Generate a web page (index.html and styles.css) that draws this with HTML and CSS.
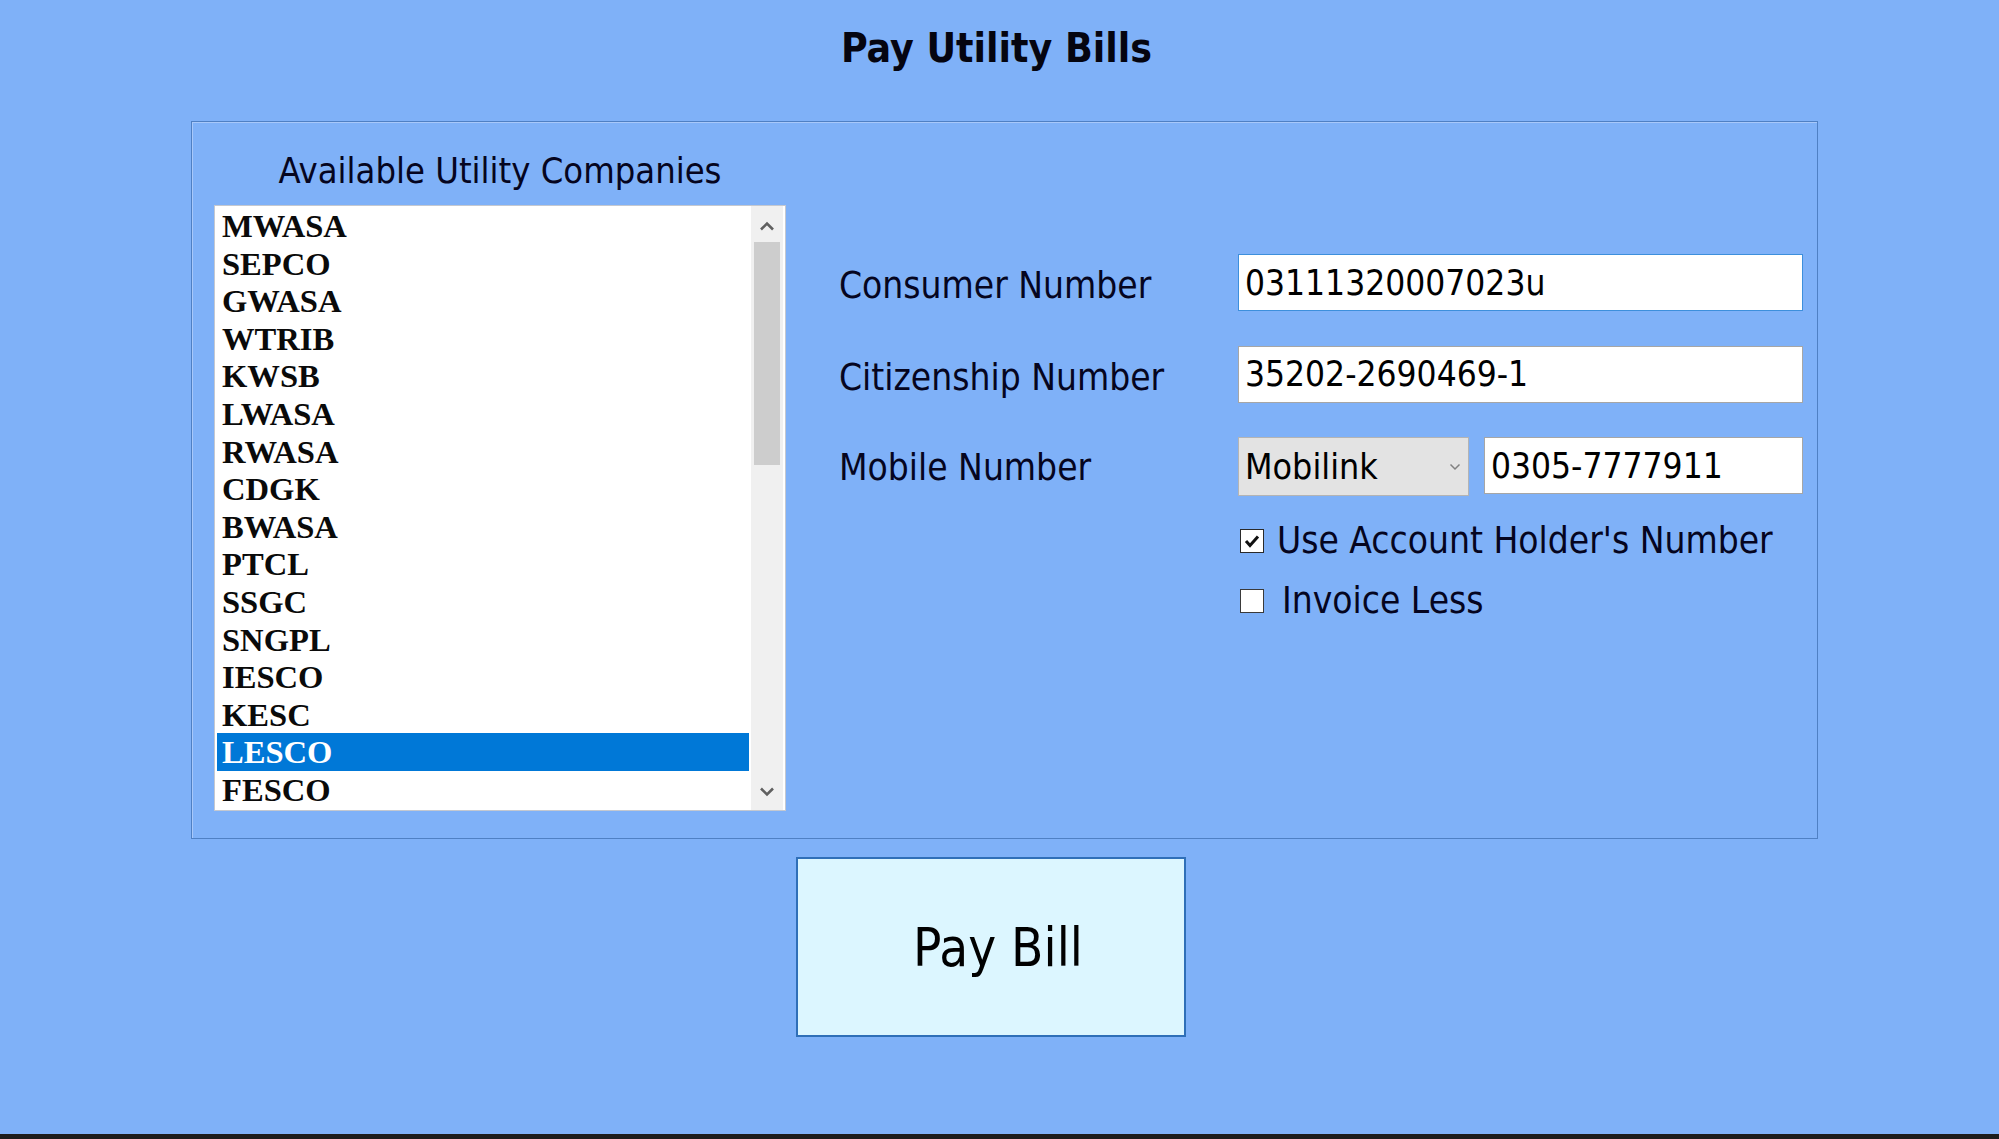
FILE: index.html
```html
<!DOCTYPE html>
<html lang="en">
<head>
<meta charset="utf-8">
<title>Pay Utility Bills</title>
<link rel="stylesheet" href="styles.css">
</head>
<body>
<div class="window">
  <h1 class="title">Pay Utility Bills</h1>
  <section class="group">
    <div class="companies">
      <div class="companies-label">Available Utility Companies</div>
      <div class="listbox">
        <ul class="items">
          <li>MWASA</li>
          <li>SEPCO</li>
          <li>GWASA</li>
          <li>WTRIB</li>
          <li>KWSB</li>
          <li>LWASA</li>
          <li>RWASA</li>
          <li>CDGK</li>
          <li>BWASA</li>
          <li>PTCL</li>
          <li>SSGC</li>
          <li>SNGPL</li>
          <li>IESCO</li>
          <li>KESC</li>
          <li class="selected">LESCO</li>
          <li>FESCO</li>
        </ul>
        <div class="scrollbar">
          <div class="sb-btn sb-up"><svg width="16" height="10" viewBox="0 0 16 10"><polyline points="2,8.5 8,2.5 14,8.5" fill="none" stroke="#606060" stroke-width="2.6"/></svg></div>
          <div class="sb-thumb"></div>
          <div class="sb-track"></div>
          <div class="sb-btn sb-down"><svg width="16" height="10" viewBox="0 0 16 10"><polyline points="2,1.5 8,7.5 14,1.5" fill="none" stroke="#606060" stroke-width="2.6"/></svg></div>
        </div>
      </div>
    </div>
    <div class="form">
      <div class="row">
        <span class="field-label">Consumer Number</span>
        <div class="input focused">03111320007023u</div>
      </div>
      <div class="row">
        <span class="field-label">Citizenship Number</span>
        <div class="input">35202-2690469-1</div>
      </div>
      <div class="row row-mobile">
        <span class="field-label">Mobile Number</span>
        <div class="mobile-controls">
          <div class="combo"><span>Mobilink</span><svg width="12" height="8" viewBox="0 0 12 8"><polyline points="1.5,1.5 6,6 10.5,1.5" fill="none" stroke="#808080" stroke-width="1.5"/></svg></div>
          <div class="input mobile-input">0305-7777911</div>
        </div>
      </div>
      <div class="checks">
        <div class="check">
          <span class="box checked"><svg width="22" height="22" viewBox="0 0 22 22"><polyline points="5,11 9,15.5 17,6.5" fill="none" stroke="#111" stroke-width="3"/></svg></span>
          <span class="check-label">Use Account Holder's Number</span>
        </div>
        <div class="check">
          <span class="box"></span>
          <span class="check-label invoice">Invoice Less</span>
        </div>
      </div>
    </div>
  </section>
  <button class="pay" type="button">Pay Bill</button>
</div>
<div class="taskbar"></div>
</body>
</html>
```
FILE: styles.css
```css
* {
  box-sizing: border-box;
}

html, body {
  margin: 0;
  padding: 0;
}

body {
  width: 1999px;
  height: 1139px;
  overflow: hidden;
  background: #7fb1f8;
  font-family: "DejaVu Sans Condensed", "DejaVu Sans", sans-serif;
  font-stretch: condensed;
  color: #000;
}

.window {
  height: 1134px;
  display: flex;
  flex-direction: column;
  align-items: flex-start;
}

.title {
  align-self: center;
  margin: 23px 0 0 -6px;
  height: 50px;
  line-height: 50px;
  font-size: 40.6px;
  font-weight: bold;
  color: #050510;
}

.group {
  margin: 48px 0 0 191px;
  width: 1627px;
  height: 718px;
  border: 1px solid #4f80c4;
  box-shadow: inset 1px 1px 0 #a8c8fa;
  display: flex;
  align-items: flex-start;
  padding-left: 22px;
}

.companies {
  width: 572px;
  margin-top: 27px;
  display: flex;
  flex-direction: column;
}

.companies-label {
  height: 44px;
  line-height: 44px;
  text-align: center;
  font-size: 36px;
  color: #050520;
}

.listbox {
  margin-top: 12px;
  height: 606px;
  background: #fff;
  border: 1px solid #c4c8d0;
  display: flex;
  padding: 0 2px 0 2px;
  gap: 2px;
  overflow: hidden;
}

.items {
  list-style: none;
  margin: 0;
  padding: 1px 0 0 0;
  width: 532px;
}

.items li {
  height: 37.6px;
  line-height: 39px;
  padding-left: 5px;
  font-family: "Liberation Serif", "Times New Roman", serif;
  font-stretch: normal;
  font-weight: bold;
  font-size: 32.6px;
  color: #0a0a0a;
  white-space: nowrap;
  overflow: hidden;
}

.items li.selected {
  background: #0078d7;
  color: #fff;
}

.scrollbar {
  width: 32px;
  background: #f0f0f0;
  display: flex;
  flex-direction: column;
}

.sb-btn {
  height: 34px;
  display: flex;
  align-items: center;
  justify-content: center;
}

.sb-up {
  padding-top: 5px;
}

.sb-down {
  padding-top: 2px;
  margin-bottom: 2px;
}

.sb-thumb {
  margin: 2px 3px 0 3px;
  height: 223px;
  background: #cdcdcd;
}

.sb-track {
  flex: 1;
}

.form {
  margin: 132px 0 0 53px;
  width: 964px;
  display: flex;
  flex-direction: column;
}

.row {
  height: 57px;
  display: flex;
  align-items: center;
}

.row + .row {
  margin-top: 34.5px;
}

.row-mobile {
  height: 59px;
}

.field-label {
  width: 399px;
  font-size: 36.8px;
  color: #050520;
  padding-top: 6px;
  white-space: nowrap;
}

.row-mobile .field-label {
  padding-top: 2px;
}

.input {
  width: 565px;
  height: 100%;
  background: #fff;
  border: 1px solid #a6a6a6;
  display: flex;
  align-items: center;
  padding: 0 0 0 6px;
  font-size: 35px;
  color: #000;
  white-space: nowrap;
}

.input.focused {
  border-color: #3d8fdc;
}

.mobile-controls {
  width: 565px;
  height: 100%;
  display: flex;
  gap: 15px;
}

.combo {
  width: 231px;
  height: 100%;
  background: #e3e3e3;
  border: 1px solid #b4b4b4;
  display: flex;
  align-items: center;
  justify-content: space-between;
  padding: 0 7px 0 6px;
  font-size: 35.5px;
}

.mobile-input {
  width: 319px;
  height: 57px;
}

.checks {
  margin: 22.5px 0 0 399px;
  display: flex;
  flex-direction: column;
  gap: 16px;
}

.check {
  height: 44px;
  display: flex;
  align-items: center;
}

.box {
  width: 24px;
  height: 24px;
  margin-left: 2px;
  background: #fff;
  border: 1px solid #3a3a3a;
  display: flex;
  align-items: center;
  justify-content: center;
}

.box.checked {
  border-color: #2a2a2a;
}

.check-label {
  margin-left: 13px;
  font-size: 36.8px;
  color: #050520;
  white-space: nowrap;
}

.check-label.invoice {
  margin-left: 18px;
}

.pay {
  margin: 18px 0 0 796px;
  width: 390px;
  height: 180px;
  background: #dcf6ff;
  border: 2px solid #2f6fb8;
  font-family: "DejaVu Sans Condensed", "DejaVu Sans", sans-serif;
  font-stretch: condensed;
  font-size: 52.5px;
  color: #000;
  padding: 0 0 0 14px;
  cursor: pointer;
}

.taskbar {
  height: 5px;
  background: #1c1c1c;
}
```
